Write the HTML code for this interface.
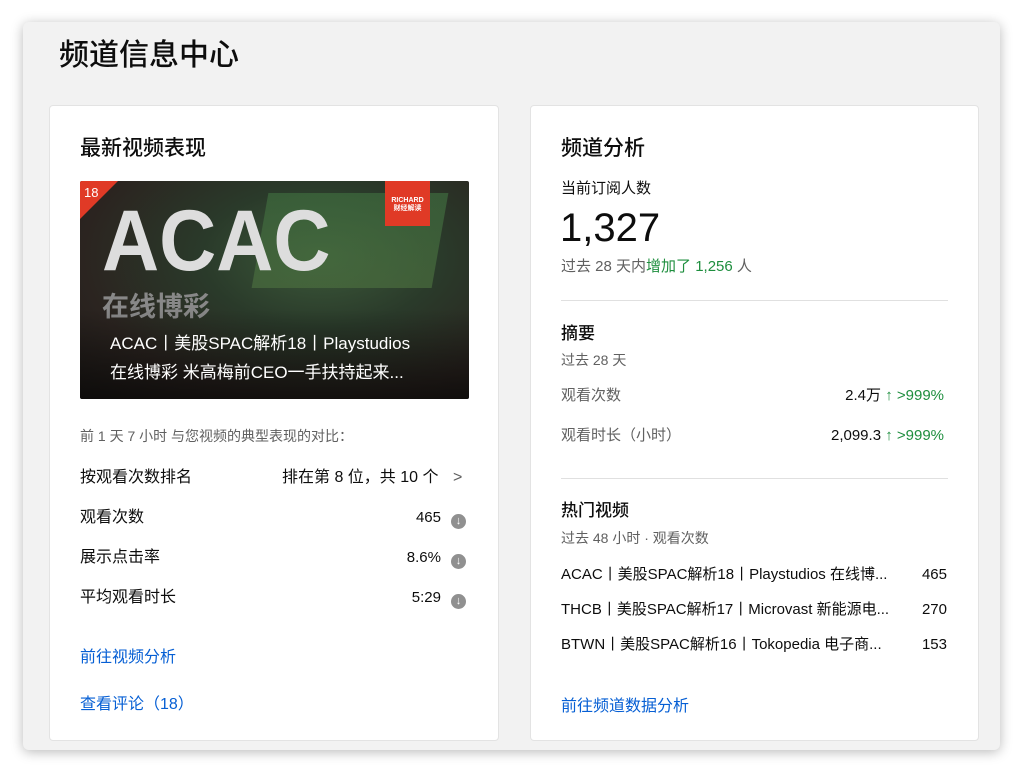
<!DOCTYPE html>
<html><head><meta charset="utf-8"><style>
*{margin:0;padding:0;box-sizing:border-box}
body{width:1023px;height:773px;background:#fff;font-family:"Liberation Sans","Noto Sans CJK SC",sans-serif;color:#0d0d0d;position:relative;overflow:hidden}
.win{position:absolute;left:23px;top:22px;width:977px;height:728px;background:#f2f2f2;border-radius:6px;box-shadow:0 2px 12px rgba(0,0,0,.28)}
.h1{position:absolute;left:59px;top:37px;font-size:30px;font-weight:500;line-height:38px}
.card{position:absolute;top:105px;height:636px;background:#fff;border:1px solid #e3e3e3;border-radius:4px}
.t{position:absolute;font-size:15px;white-space:nowrap;line-height:20px}
.g{color:#606060}
.b{color:#065fd4}
.ic{display:inline-block;width:15px;height:15px;border-radius:50%;background:#909090;color:#fff;font-size:11px;line-height:15px;text-align:center;vertical-align:-2px;margin-left:10px;font-weight:bold}
.hr{position:absolute;height:1px;background:#e0e0e0}
.up{color:#1e8e3e;font-weight:bold}
</style></head><body>
<div class="win"></div>
<div class="h1">频道信息中心</div>

<div class="card" style="left:49px;width:450px"></div>
<div class="t" style="left:80px;top:136px;font-size:21px;line-height:26px;font-weight:500">最新视频表现</div>
<div style="position:absolute;left:80px;top:181px;width:389px;height:218px;border-radius:2px;overflow:hidden;background:radial-gradient(ellipse at 62% 35%,#3c5a3a 0%,#2a3a2a 35%,#2b2420 70%,#1e1a18 100%)">
 <div style="position:absolute;left:180px;top:12px;width:180px;height:95px;background:linear-gradient(#3e6b3e,#4a6d3e);opacity:.7;transform:skewX(-10deg)"></div>
 <div style="position:absolute;left:0;top:0;width:0;height:0;border-top:38px solid #e03a26;border-right:38px solid transparent"></div>
 <div style="position:absolute;left:4px;top:4px;color:#fff;font-size:13px">18</div>
 <div style="position:absolute;left:305px;top:0;width:45px;height:45px;background:#e03a26;color:#fff;font-size:7px;font-weight:bold;text-align:center;padding-top:16px;line-height:8px">RICHARD<br>财经解读</div>
 <div style="position:absolute;left:22px;top:20px;font-size:86px;font-weight:900;color:#ddd;line-height:80px;transform:scaleX(.92);transform-origin:left;font-family:'Liberation Sans',sans-serif">ACAC</div>
 <div style="position:absolute;left:22px;top:104px;font-size:27px;font-weight:bold;color:#888">在线博彩</div>
 <div style="position:absolute;left:0;bottom:0;width:100%;height:90px;background:linear-gradient(rgba(0,0,0,0),rgba(0,0,0,.55))"></div>
 <div style="position:absolute;left:30px;top:148px;color:#fff;font-size:17px;line-height:29px">ACAC丨美股SPAC解析18丨Playstudios<br>在线博彩 米高梅前CEO一手扶持起来...</div>
</div>
<div class="t g" style="left:80px;top:426px;font-size:14px">前 1 天 7 小时 与您视频的典型表现的对比：</div>
<div class="t" style="left:80px;top:468px;font-size:16px">按观看次数排名</div>
<div class="t" style="left:282px;top:468px;font-size:16px">排在第 8 位，共 10 个 <span style="margin-left:10px;color:#606060">&gt;</span></div>
<div class="t" style="left:80px;top:508px;font-size:16px">观看次数</div><div class="t" style="right:557px;top:508px">465<span class="ic">↓</span></div>
<div class="t" style="left:80px;top:548px;font-size:16px">展示点击率</div><div class="t" style="right:557px;top:548px">8.6%<span class="ic">↓</span></div>
<div class="t" style="left:80px;top:588px;font-size:16px">平均观看时长</div><div class="t" style="right:557px;top:588px">5:29<span class="ic">↓</span></div>
<div class="t b" style="left:80px;top:648px;font-size:16px">前往视频分析</div>
<div class="t b" style="left:80px;top:695px;font-size:16px">查看评论（18）</div>

<div class="card" style="left:530px;width:449px"></div>
<div class="t" style="left:561px;top:136px;font-size:21px;line-height:26px;font-weight:500">频道分析</div>
<div class="t" style="left:561px;top:179px;font-size:15px">当前订阅人数</div>
<div class="t" style="left:560px;top:205px;font-size:40px;line-height:46px">1,327</div>
<div class="t g" style="left:561px;top:257px">过去 28 天内<span style="color:#1e8e3e">增加了 1,256</span> 人</div>
<div class="hr" style="left:561px;top:300px;width:387px"></div>
<div class="t" style="left:561px;top:323px;font-size:17px;line-height:22px;font-weight:500">摘要</div>
<div class="t g" style="left:561px;top:350px;font-size:14px">过去 28 天</div>
<div class="t g" style="left:561px;top:386px">观看次数</div><div class="t" style="right:79px;top:386px">2.4万 <span class="up">↑</span> <span style="color:#1e8e3e">&gt;999%</span></div>
<div class="t g" style="left:561px;top:426px">观看时长（小时）</div><div class="t" style="right:79px;top:426px">2,099.3 <span class="up">↑</span> <span style="color:#1e8e3e">&gt;999%</span></div>
<div class="hr" style="left:561px;top:478px;width:387px"></div>
<div class="t" style="left:561px;top:500px;font-size:17px;line-height:22px;font-weight:500">热门视频</div>
<div class="t g" style="left:561px;top:528px;font-size:14px">过去 48 小时 · 观看次数</div>
<div class="t" style="left:561px;top:565px">ACAC丨美股SPAC解析18丨Playstudios 在线博...</div><div class="t" style="right:76px;top:565px">465</div>
<div class="t" style="left:561px;top:600px">THCB丨美股SPAC解析17丨Microvast 新能源电...</div><div class="t" style="right:76px;top:600px">270</div>
<div class="t" style="left:561px;top:635px">BTWN丨美股SPAC解析16丨Tokopedia 电子商...</div><div class="t" style="right:76px;top:635px">153</div>
<div class="t b" style="left:561px;top:697px;font-size:16px">前往频道数据分析</div>
</body></html>
